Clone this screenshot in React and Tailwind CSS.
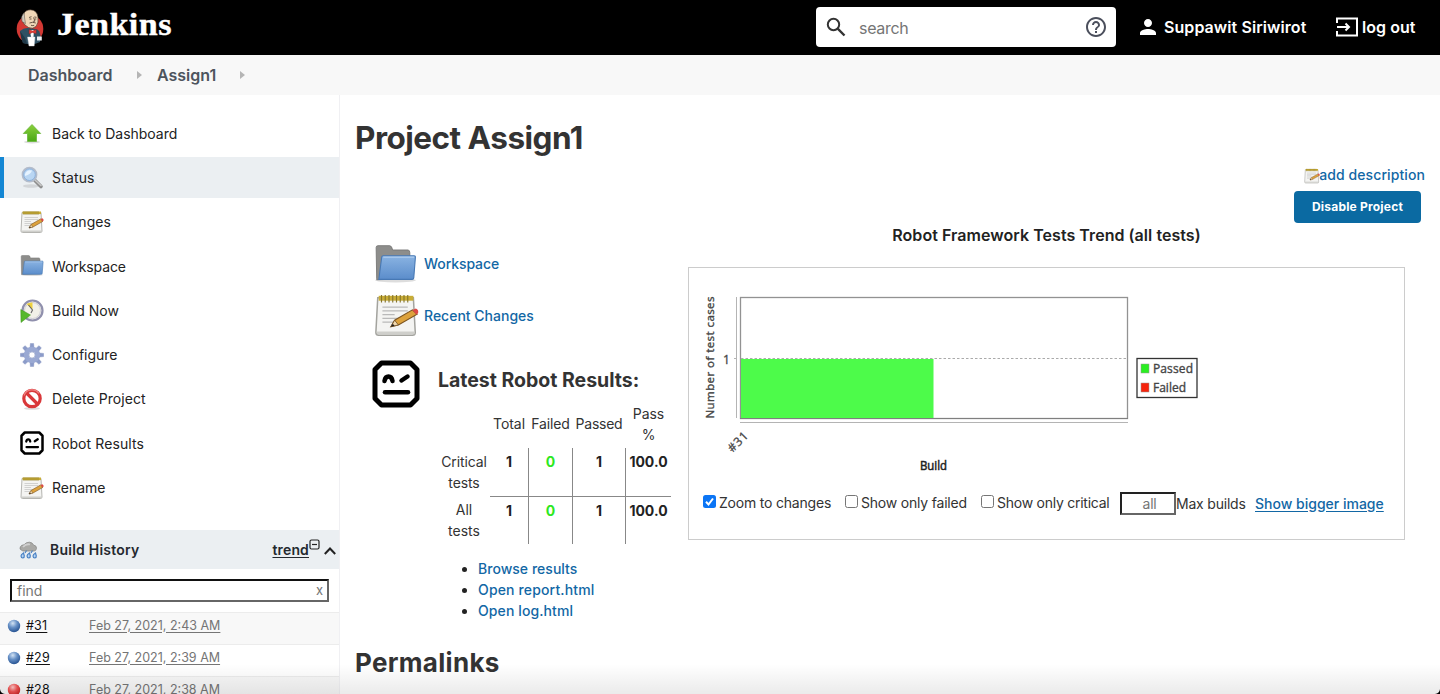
import React from "react";

const BLUE = "text-[#1267a5]";

function Butler() {
  return (
    <svg className="h-[38px] w-[28px] shrink-0" viewBox="0 0 28 38">
      <ellipse cx="14" cy="20" rx="13.300" ry="14" fill="#d33833" />
      <path d="M4 22 Q8 18.500 12 19 L20 20 Q24 21 24.500 27 L24 33 Q20 35 14 35.500 L7 34 Q5 28 4 22Z" fill="#2f5063" />
      <path d="M4 22 L9 29 L11 35 L7 34 Q4.500 28 4 22Z" fill="#203847" />
      <path d="M7 6 Q9 .800 14.500 .800 Q21 1 22 8 Q22.800 14 20 17.500 Q16.500 20.500 12.500 18.500 Q7.500 16 6 11Z" fill="#f0d6b7" stroke="#3a2b22" strokeWidth=".6" />
      <path d="M6 12.500 Q4.500 7 8.200 3.500 L8.600 9 L9.500 14.500Z" fill="#cfcac0" stroke="#3a2b22" strokeWidth=".4" />
      <path d="M13 8.500 l2.500 -.800 M18.300 8 l2.200 .3 M17.500 8.500 l1.500 3.600 l-1.800 .3 M13.500 14 q3 -1.400 6.300 0 M15 16.300 q2 .6 3.200 0 M13.500 10 h2 M18.800 10 h1.500" stroke="#3a2b22" strokeWidth=".75" fill="none" />
      <path d="M14 21 L18 21 L17.500 28 L15 28Z" fill="#fff" />
      <path d="M13 20.500 l3.500 1.500 l3.700 -1.500 v4.300 l-3.700 -1.300 l-3.500 1.500Z" fill="#e03b36" stroke="#81201c" strokeWidth=".4" />
      <path d="M11.500 28 L19 28 L18.200 37 L13 37Z" fill="#fff" stroke="#cfd6dc" strokeWidth=".4" />
      <path d="M21 27.500 h4.800 v4 h-4.800Z" fill="#e9eef1" />
    </svg>
  );
}

function UpArrow() {
  return (
    <svg className="size-6" viewBox="0 0 24 24">
      <defs><linearGradient id="ga" x1="0" y1="0" x2="0" y2="1"><stop offset="0" stopColor="#8bd03d" /><stop offset="1" stopColor="#4aa815" /></linearGradient></defs>
      <ellipse cx="12" cy="20" rx="8" ry="1.500" fill="#ddd" />
      <path d="M12 2.500 L20.700 11.500 H16.500 V19.500 H7.500 V11.500 H3.300Z" fill="url(#ga)" stroke="#6ab83a" strokeWidth=".8" />
    </svg>
  );
}

function Magnifier() {
  return (
    <svg className="size-6" viewBox="0 0 24 24">
      <ellipse cx="11" cy="20" rx="8" ry="1.800" fill="#d2d5d8" />
      <path d="M14.500 14 L21 20.500" stroke="#8d8d8d" strokeWidth="3.600" strokeLinecap="round" />
      <path d="M15 14 L21.500 20" stroke="#c9c9c9" strokeWidth="1.500" />
      <circle cx="9.500" cy="8.700" r="7" fill="#b9d6f3" stroke="#b3bccb" strokeWidth="1.800" />
      <circle cx="9.500" cy="8.700" r="5.800" fill="none" stroke="#7ba5d6" strokeWidth=".7" />
      <path d="M5 8 Q7 3 12 4.500 Q11 8 5 10Z" fill="#e6f3ff" />
    </svg>
  );
}

function Notepad({ className = "size-6" }) {
  return (
    <svg className={className} viewBox="0 0 24 24">
      <path d="M2 2.500 H21 L22 21 Q22 22.500 20.500 22.500 H2.500 Q1 22.500 1 21Z" fill="#f4f4f2" stroke="#a3a39e" strokeWidth=".8" />
      <path d="M1.500 20.500 H21.700 V22 H1.500Z" fill="#cfcfcb" />
      <rect x="2.500" y="1.500" width="18.500" height="2.600" fill="#c9ad36" />
      <path d="M4 1 v4 M6 1 v4 M8 1 v4 M10 1 v4 M12 1 v4 M14 1 v4 M16 1 v4 M18 1 v4" stroke="#86752a" strokeWidth=".6" />
      <path d="M4.500 7.500 H18 M4.500 9.500 H18 M4.500 11.500 H11 M4.500 13.500 H15 M4.500 15.500 H11" stroke="#b9b9b9" strokeWidth=".6" />
      <path d="M9 18 L11 14.500 L20.500 9 L23 11.300 L13 17Z" fill="#dda23c" stroke="#7c5420" strokeWidth=".6" />
      <path d="M9 18 L11 14.500 L13 17Z" fill="#f1d9ae" stroke="#6b4a20" strokeWidth=".4" />
      <path d="M9 18 l1 -1.600 l1 1Z" fill="#222" />
      <path d="M20.500 9 L22.300 8.300 Q24 9 23.500 10.800 L22.500 11.500Z" fill="#dc4a46" />
    </svg>
  );
}

function Folder({ className = "size-6" }) {
  return (
    <svg className={className} viewBox="0 0 24 24">
      <defs><linearGradient id="fb" x1="0" y1="0" x2="0" y2="1"><stop offset="0" stopColor="#8ab3e2" /><stop offset="1" stopColor="#5b8dcb" /></linearGradient></defs>
      <ellipse cx="12" cy="20.800" rx="11.300" ry="1.200" fill="#ddd" />
      <path d="M1.500 20 L1.200 2.500 Q1.200 1.500 2.200 1.500 H8.800 Q9.900 1.500 10.400 3.900 H19 Q20 4 20 5.500 V20 L1.500 20.500Z" fill="#8d8d8b" stroke="#777775" strokeWidth=".5" />
      <path d="M4.300 7.900 Q4.400 7.100 5.100 7.100 H22.400 Q23.200 7.100 23.100 8 L22.200 19.500 Q22.100 20.300 21.300 20.300 H2.700Z" fill="url(#fb)" stroke="#4778b4" strokeWidth=".6" />
      <path d="M5.200 7.900 H22.400" stroke="#b4d0ef" strokeWidth=".6" />
    </svg>
  );
}

function ClockPlay() {
  return (
    <svg className="size-6" viewBox="0 0 24 24">
      <circle cx="12.500" cy="11.500" r="10" fill="#f2f1e8" stroke="#9090ad" strokeWidth="2.200" />
      <circle cx="12.500" cy="11.500" r="8" fill="none" stroke="#c5c4d0" strokeWidth=".8" />
      <path d="M12.500 10.500 L6.500 5 Q10 3 12.500 3.500Z" fill="#efd23e" />
      <path d="M8.500 6 L12.500 11 L11 14" stroke="#666" strokeWidth="1.100" fill="none" />
      <path d="M.800 10.500 L10.500 16 L1 23.500Z" fill="#56b82c" stroke="#3d931b" strokeWidth=".5" />
    </svg>
  );
}

function Gear() {
  const teeth = [0, 45, 90, 135, 180, 225, 270, 315];
  return (
    <svg className="size-6" viewBox="0 0 24 24">
      {teeth.map((a) => (
        <path key={a} d="M10 5 L10.400 .400 H13.600 L14 5Z" fill="#8b9bc9" stroke="#7c8cba" strokeWidth=".4" transform={`rotate(${a} 12 12)`} />
      ))}
      <circle cx="12" cy="12" r="5.700" fill="none" stroke="#9aa9d3" strokeWidth="5" />
      <circle cx="12" cy="12" r="3.100" fill="#fff" stroke="#8292c0" strokeWidth=".6" />
    </svg>
  );
}

function NoEntry() {
  return (
    <svg className="size-6" viewBox="0 0 24 24">
      <ellipse cx="12" cy="21.500" rx="8" ry="1.300" fill="#ddd" />
      <circle cx="12" cy="11.500" r="8.200" fill="#fff" stroke="#d9383a" strokeWidth="3.200" />
      <path d="M6.500 6 L17.500 17" stroke="#d9383a" strokeWidth="3.200" />
      <path d="M4 8.500 A8.500 8.500 0 0 1 19 6.500" stroke="#ee8484" strokeWidth="1.200" fill="none" />
    </svg>
  );
}

function Robot({ className = "size-6" }) {
  return (
    <svg className={className} viewBox="0 0 48 48" fill="none" stroke="#000" strokeLinecap="round">
      <path d="M9.500 3 H38.500 L45 9.500 V38.500 L38.500 45 H9.500 L3 38.500 V9.500Z" strokeWidth="5" strokeLinejoin="round" />
      <path d="M12.500 21 C13.500 15 19.500 15 20.500 21 M29.500 20.500 L35.500 16.500" strokeWidth="4.500" />
      <path d="M13 32.200 H36" strokeWidth="4.500" />
    </svg>
  );
}

function Storm() {
  return (
    <svg className="h-[19px] w-[19px] shrink-0" viewBox="0 0 19 19">
      <path d="M3 10.500 Q0 9.500 1.300 6.800 Q2.500 4.800 5 4.800 Q7 2 10.500 2.200 Q13.500 2.400 14.500 5 Q18 5.800 17.500 8.600 Q17 11 15 11 H4Z" fill="#a9a9a6" stroke="#8a8a88" strokeWidth=".8" />
      <path d="M4 7 Q7 3.500 11 4.500" stroke="#cfcfcf" strokeWidth="1.800" fill="none" />
      <g fill="#b5d3f3" stroke="#4a82c4" strokeWidth="1.200">
        <path d="M4.500 13 Q2 14.500 2 16 Q2.200 18 3.800 18 Q5.500 17.800 5.300 15.800Z M10.500 13 Q8 14.500 8 16 Q8.200 18 9.800 18 Q11.500 17.800 11.300 15.800Z M16.500 13 Q14 14.500 14 16 Q14.200 18 15.800 18 Q17.500 17.800 17.300 15.800Z" />
        <path d="M7.500 10.500 L6 13 M13.500 10.500 L12 13" />
      </g>
    </svg>
  );
}

function Ball({ red }) {
  return (
    <svg className="size-[14px] shrink-0" viewBox="0 0 14 14">
      <defs>
        <radialGradient id="bb" cx=".4" cy=".28" r=".7"><stop offset="0" stopColor="#d3e3f4" /><stop offset=".5" stopColor="#6690c6" /><stop offset="1" stopColor="#2c5896" /></radialGradient>
        <radialGradient id="br" cx=".4" cy=".28" r=".7"><stop offset="0" stopColor="#ffc9c9" /><stop offset=".5" stopColor="#f25555" /><stop offset="1" stopColor="#cc2525" /></radialGradient>
      </defs>
      <circle cx="7" cy="7" r="6.200" fill={red ? "url(#br)" : "url(#bb)"} />
    </svg>
  );
}

const tasks = [
  ["Back to Dashboard", <UpArrow />, "tracking-[-0.02px]"],
  ["Status", <Magnifier />, "tracking-[0.150px]"],
  ["Changes", <Notepad />, "tracking-[0px]"],
  ["Workspace", <Folder />, "mt-px tracking-[-0.1px]"],
  ["Build Now", <ClockPlay />, "tracking-[0px]"],
  ["Configure", <Gear />, "tracking-[0px]"],
  ["Delete Project", <NoEntry />, "tracking-[0.05px]"],
  ["Robot Results", <Robot />, "mt-px tracking-[0.1px]"],
  ["Rename", <Notepad />, "tracking-[0px]"],
];

const builds = [
  ["#31", "Feb 27, 2021, 2:43 AM", false],
  ["#29", "Feb 27, 2021, 2:39 AM", false],
  ["#28", "Feb 27, 2021, 2:38 AM", true],
];

function Header() {
  return (
    <header className="flex h-[55px] shrink-0 items-center bg-black text-white">
      <div className="ml-[16px] flex items-center">
        <Butler />
        <span className="mt-[-5px] ml-[13px] origin-left scale-x-[1.100] font-['Liberation_Serif',serif] text-[31px] leading-[36px] font-bold tracking-[0.400px] [-webkit-text-stroke:0.4px_white]">Jenkins</span>
      </div>
      <div className="mb-px ml-auto flex h-10 w-[300px] items-center rounded-[4px] bg-white pr-[9px] pl-[10px]">
        <svg className="size-5" viewBox="0 0 20 20" fill="none" stroke="#333" strokeWidth="2"><circle cx="7.500" cy="7.500" r="5.700" /><path d="M11.700 11.700 L18.500 18.500" strokeWidth="2.400" /></svg>
        <span className="mt-px ml-[13px] flex-1 text-[16px] tracking-[-0.3px] text-[#757575]">search</span>
        <svg className="-mr-px size-[24px]" viewBox="0 0 24 24" fill="#4b4f5c"><path d="M11 18h2v-2h-2v2zm1-16C6.480 2 2 6.480 2 12s4.480 10 10 10 10-4.480 10-10S17.520 2 12 2zm0 18c-4.410 0-8-3.590-8-8s3.590-8 8-8 8 3.590 8 8-3.590 8-8 8zm0-14c-2.210 0-4 1.790-4 4h2c0-1.100.9-2 2-2s2 .9 2 2c0 2-3 1.750-3 5h2c0-2.250 3-2.500 3-5 0-2.210-1.790-4-4-4z" /></svg>
      </div>
      <svg className="mb-[2px] ml-[24px] h-[16px] w-[16px]" viewBox="4 4 16 16" fill="#fff"><path d="M12 12c2.210 0 4-1.790 4-4s-1.790-4-4-4-4 1.790-4 4 1.790 4 4 4zm0 2c-2.670 0-8 1.340-8 4v2h16v-2c0-2.660-5.330-4-8-4z" /></svg>
      <span className="mb-px ml-[8px] w-[142px] whitespace-nowrap text-[16px] font-semibold tracking-[0.070px]">Suppawit Siriwirot</span>
      <svg className="mb-[2px] ml-[30px] h-[20px] w-[22px]" viewBox="0 0 22 20" fill="none" stroke="#fff" strokeWidth="2"><path d="M1 6 V1.500 H21 V18.500 H1 V14 M1 10 H13 M9.500 6.500 L13 10 L9.500 13.500" /></svg>
      <span className="mr-[24px] mb-px ml-[4px] w-[54px] whitespace-nowrap text-[16px] font-semibold tracking-[0.050px]">log out</span>
    </header>
  );
}

function Arrow() {
  return <svg className="h-[8px] w-[5px]" viewBox="0 0 5 8"><path d="M0 0 L5 4 L0 8Z" fill="#b5b5b5" /></svg>;
}

function Sidebar() {
  return (
    <aside className="flex w-[340px] shrink-0 flex-col border-r border-[#f0f0f3] pt-[18px]">
      <nav className="flex flex-col gap-[3.250px]">
        {tasks.map(([label, icon, t]) => (
          <a key={label} className={"flex h-[41px] items-center border-l-4 pl-4 " + (label === "Status" ? "border-[#1487d4] bg-[#ebeff2]" : "border-transparent")}>
            {icon}
            <span className={"ml-2 text-[14px] leading-5 text-[#222] " + t}>{label}</span>
          </a>
        ))}
      </nav>
      <div className="mt-[22px] flex h-[39px] shrink-0 items-center bg-[#ebeff2] pl-[19px] text-[14px] text-[#24282e]">
        <Storm />
        <span className="ml-[12px] font-semibold tracking-[0.230px]">Build History</span>
        <span className="ml-auto font-semibold tracking-[0.150px] underline underline-offset-2">trend</span>
        <svg className="mb-[11px] size-[11px]" viewBox="0 0 11 11" fill="none" stroke="#222" strokeWidth="1.200"><rect x="1" y="1" width="9" height="9" rx="1.500" /><path d="M3 5.500 H8" /></svg>
        <svg className="mt-[3px] mr-[3px] ml-[4px] h-[8px] w-[12px]" viewBox="0 0 12 8" fill="none" stroke="#222" strokeWidth="2"><path d="M.800 7 L6 1.500 L11.200 7" /></svg>
      </div>
      <div className="mx-[10px] mt-[10px] flex h-[23px] shrink-0 items-center justify-between border-2 border-t-[#111] border-r-[#666] border-b-[#666] border-l-[#111] pr-[4px] pl-[5px] text-[14px] text-[#757575]">
        <span>find</span>
        <span className="text-[13px]">x</span>
      </div>
      <div className="mt-[10px]">
        {builds.map(([n, d, red], i) => (
          <div key={n} className={"flex h-[32px] items-center border-t border-[#ececec] pb-[5px] pl-[7px] text-[12.500px] " + (i % 2 ? "bg-white" : "bg-[#f8f8f8]")}>
            <Ball red={red} />
            <span className="ml-[5px] w-[63px] tracking-[0.2px] text-[#111] underline underline-offset-2">{n}</span>
            <span className="text-[#757575] underline underline-offset-2">{d}</span>
          </div>
        ))}
      </div>
    </aside>
  );
}

function Chart() {
  return (
    <svg className="block h-[200px] w-[510px]" viewBox="700 285 510 200" fontFamily="'Open Sans','Noto Sans',sans-serif" fontSize="12" fill="#444">
      <rect x="740.500" y="297.500" width="387" height="121" fill="#fff" stroke="#929292" strokeWidth="1.300" />
      <path d="M741 358.500 H1127" stroke="#aaa" strokeDasharray="2.500 2" />
      <rect x="741" y="359" width="192.500" height="59.500" fill="#4dfb4a" />
      <path d="M740 418.500 H1128" stroke="#7f7f7f" />
      <path d="M736.500 297 V418 M734 358.500 H737 M740 422.500 H1128" stroke="#b4b4b4" />
      <text transform="translate(714 418.500) rotate(-90)" textLength="122" stroke="#444" strokeWidth=".35" fontSize="11.500">Number of test cases</text>
      <text x="723" y="364" stroke="#444" strokeWidth=".3">1</text>
      <text transform="translate(732.500 453) rotate(-45)" textLength="23" stroke="#444" strokeWidth=".3">#31</text>
      <text x="920" y="470" textLength="27" lengthAdjust="spacingAndGlyphs" stroke="#222" strokeWidth=".5" fill="#222">Build</text>
      <rect x="1137" y="358.500" width="60" height="39" fill="#fff" stroke="#333" strokeWidth="1.300" />
      <rect x="1141" y="364" width="8" height="9" fill="#2bee22" stroke="#999" strokeWidth=".5" />
      <rect x="1141" y="383" width="8" height="9" fill="#f5240d" stroke="#999" strokeWidth=".5" />
      <text x="1153" y="373" textLength="40" stroke="#444" strokeWidth=".35">Passed</text>
      <text x="1153" y="392" textLength="33" stroke="#444" strokeWidth=".35">Failed</text>
    </svg>
  );
}

function Check({ on }) {
  return on ? (
    <svg className="size-[13px] shrink-0" viewBox="0 0 13 13"><rect width="13" height="13" rx="2.500" fill="#0b75f5" /><path d="M3 6.800 L5.500 9.500 L10 3.500" fill="none" stroke="#fff" strokeWidth="2" /></svg>
  ) : (
    <span className="size-[13px] shrink-0 rounded-[2.500px] border border-[#767676] bg-white" />
  );
}

function Results() {
  const rows = [["Critical", "tests"], ["All", "tests"]];
  return (
    <div className="ml-[98px] w-[233px] text-center text-[14px] leading-[21px] text-[#333]">
      <div className="grid grid-cols-[52px_39px_44px_53px_45px] items-center whitespace-nowrap pt-[9px] pb-[3px] tracking-[-0.050px]">
        <span /><span className="pr-px pb-[2px]">Total</span><span className="pr-px pb-[2px] tracking-[-0.1px]">Failed</span><span className="pr-px pb-[2px] tracking-[-0.250px]">Passed</span><span>Pass<br />%</span>
      </div>
      {rows.map(([a, b], i) => (
        <div key={a} className={"grid grid-cols-[52px_39px_44px_53px_45px] font-bold " + (i ? "h-[47px]" : "h-[49px]")}>
          <span className={"font-normal " + (i ? "pt-[2px]" : "pt-[3px] tracking-[-0.1px]")}>{a}<br />{b}</span>
          {["1", "0", "1", "100.0"].map((v, j) => (
            <span key={j} className={"pt-[3px] " + (j < 3 ? "border-r border-r-[#888] " : "") + (i ? "" : "border-b border-b-[#888] ") + (j === 1 ? "text-[#2ee81f]" : "text-[#222]")}>{v}</span>
          ))}
        </div>
      ))}
    </div>
  );
}

export default function App() {
  return (
    <div className="relative flex h-[694px] w-[1440px] flex-col overflow-hidden bg-white font-['Inter','Liberation_Sans',sans-serif] text-[#333]">
      <Header />
      <div className="flex h-[40px] shrink-0 items-center bg-[#f8f8f8] pl-[28px] text-[16px] font-semibold text-[#4d545d]">
        <span className="w-[109px]">Dashboard</span><Arrow />
        <span className="ml-[15px] w-[83px]">Assign1</span><Arrow />
      </div>
      <div className="flex h-[599px] shrink-0">
        <Sidebar />
        <main className="flex flex-1 flex-col">
          <h1 className="mt-[23px] ml-[15px] h-[40px] text-[31.500px] leading-[40px] font-bold tracking-[-0.500px]">Project Assign1</h1>
          <div className={"mt-[6px] mr-[15px] flex h-[20px] items-center justify-end text-[14px] font-medium " + BLUE}>
            <Notepad className="mt-[4px] size-[16px]" /><span className="-ml-px tracking-[0.090px]">add description</span>
          </div>
          <button className="mt-[7px] mr-[19px] h-[32px] w-[127px] self-end rounded-[4px] bg-[#0b6aa2] text-[12px] font-bold tracking-[0.2px] text-white">Disable Project</button>
          <div className="flex h-[411px]">
            <section className="w-[348px]">
              <div className="mt-[14px] ml-[34px] flex h-[52px] items-center">
                <Folder className="mt-[2px] size-[43px]" /><span className={"ml-[7px] text-[14px] font-medium tracking-[-0.080px] " + BLUE}>Workspace</span>
              </div>
              <div className="ml-[34px] flex h-[52px] items-center">
                <Notepad className="size-[45px]" /><span className={"ml-[5px] text-[14px] font-medium " + BLUE}>Recent Changes</span>
              </div>
              <div className="mt-[19px] ml-[32px] flex h-[34px]">
                <Robot className="size-12" />
                <h2 className="ml-[18px] pt-[6px] text-[19.500px] leading-[28px] font-bold whitespace-nowrap tracking-[-0.010px]">Latest Robot Results:</h2>
              </div>
              <Results />
              <ul className={"mt-[14px] ml-[138px] list-disc text-[14px] leading-[21px] font-medium tracking-[0.1px] marker:text-[#222] " + BLUE}>
                <li className="tracking-[0.030px]">Browse results</li><li className="tracking-[0.150px]">Open report.html</li><li>Open log.html</li>
              </ul>
            </section>
            <section className="w-[717px]">
              <h3 className="text-center text-[16px] leading-[24px] font-semibold tracking-[0.050px] text-[#222]">Robot Framework Tests Trend (all tests)</h3>
              <div className="mt-[20px] h-[273px] border border-[#ccc] pt-[17px] pl-[11px]">
                <Chart />
                <div className="mt-[3px] ml-[3px] flex h-[26px] items-center whitespace-nowrap text-[14px] tracking-[-0.2px]">
                  <Check on /><span className="mt-[3px] ml-[3px] w-[126px]">Zoom to changes</span>
                  <Check /><span className="mt-[3px] ml-[3px] w-[120px]">Show only failed</span>
                  <Check /><span className="mt-[3px] ml-[3px] w-[123px] tracking-[-0.250px]">Show only critical</span>
                  <span className="mt-[4px] h-[23px] w-[56px] border-2 border-t-[#222] border-r-[#666] border-b-[#666] border-l-[#222] pl-[3px] text-center leading-[20px] text-[#757575]">all</span>
                  <span className="mt-[5px] w-[79px]">Max builds</span>
                  <span className={"mt-[4px] font-medium tracking-[0px] underline underline-offset-2 " + BLUE}>Show bigger image</span>
                </div>
              </div>
            </section>
          </div>
          <h2 className="mt-[11px] ml-[15px] text-[26px] leading-[36px] font-bold tracking-[0.300px]">Permalinks</h2>
        </main>
      </div>
      <div className="pointer-events-none absolute inset-x-0 bottom-0 h-[30px] bg-gradient-to-b from-transparent to-black/8" />
      <svg className="pointer-events-none absolute bottom-0 left-0 size-[5px]" viewBox="0 0 5 5"><path d="M0 0 Q.500 4.500 5 5 H0Z" fill="#000" /></svg>
      <svg className="pointer-events-none absolute right-0 bottom-0 size-[5px]" viewBox="0 0 5 5"><path d="M5 0 Q4.500 4.500 0 5 H5Z" fill="#000" /></svg>
    </div>
  );
}
